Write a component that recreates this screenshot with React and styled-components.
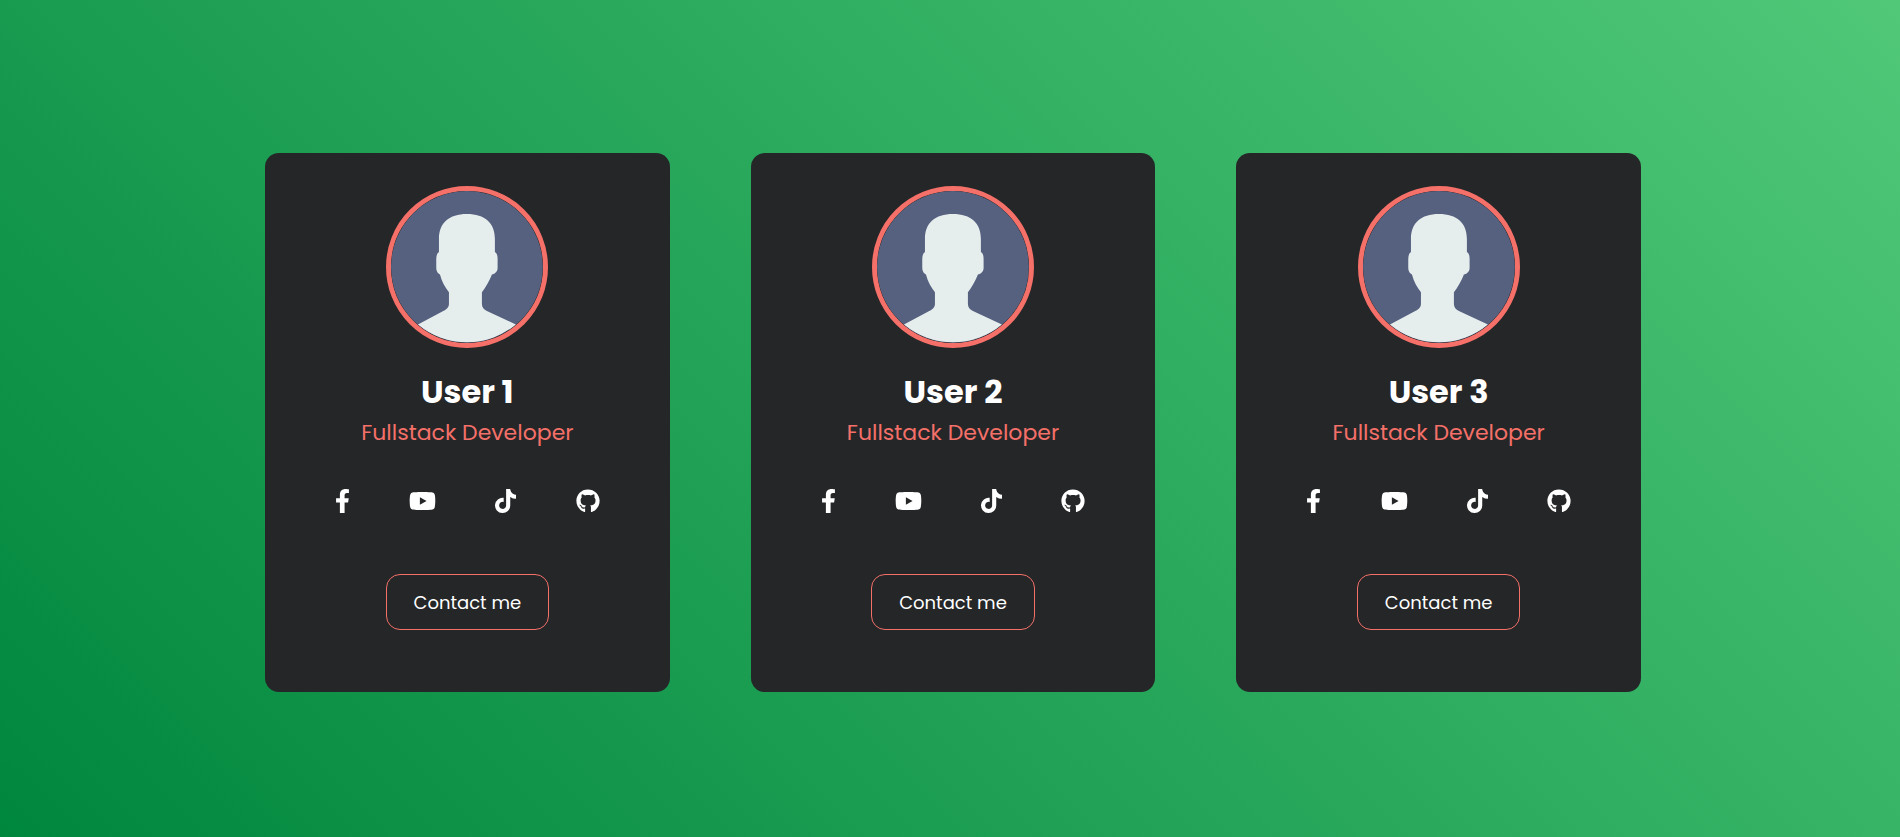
import React from "react";
import styled, { createGlobalStyle } from "styled-components";
import { FaFacebookF, FaYoutube, FaTiktok, FaGithub } from "react-icons/fa";

const GlobalStyle = createGlobalStyle`
  * {
    box-sizing: border-box;
    margin: 0;
    padding: 0;
  }

  body {
    font-family: Poppins, Inter, "Liberation Sans", sans-serif;
  }
`;

const Page = styled.main`
  display: flex;
  align-items: center;
  justify-content: center;
  min-height: 100vh;
  padding: 8px 0 0 6px;
  background: linear-gradient(45deg, #00873e, #50c878);
`;

const CardGrid = styled.div`
  display: grid;
  grid-template-columns: repeat(3, 1fr);
  gap: 81px;
  width: 100%;
  max-width: 1376px;

  @media (max-width: 1100px) {
    grid-template-columns: minmax(0, 405px);
    justify-content: center;
    gap: 40px;
    padding: 40px 20px;
  }
`;

const Card = styled.article`
  display: flex;
  flex-direction: column;
  align-items: center;
  padding: 33px 0 62px;
  border-radius: 14px;
  background: #252628;
  color: #fff;
`;

const Avatar = styled.svg`
  display: block;
  width: 40%;
  aspect-ratio: 1;
  margin-bottom: 20px;
  border: 5px solid #f47068;
  border-radius: 50%;
`;

const Name = styled.h2`
  font-size: 32px;
  font-weight: 700;
  line-height: 48px;
`;

const Role = styled.p`
  margin-bottom: 39px;
  color: #f47068;
  font-size: 22px;
  line-height: 34px;
`;

const Socials = styled.nav`
  display: flex;
  justify-content: space-around;
  width: 80%;
  margin-bottom: 61px;
`;

const SocialLink = styled.a`
  color: #fff;

  svg {
    display: block;
    width: ${({ $width }) => $width}px;
    height: 24px;
  }
`;

const ContactButton = styled.button`
  padding: 15px 27px 13px;
  border: 1px solid #f47068;
  border-radius: 14px;
  background: transparent;
  color: #fff;
  font-family: inherit;
  font-size: 18px;
  line-height: 26px;
  white-space: nowrap;
  cursor: pointer;
`;

const users = ["User 1", "User 2", "User 3"];

const socials = [
  { label: "Facebook", Icon: FaFacebookF, width: 15 },
  { label: "YouTube", Icon: FaYoutube, width: 27 },
  { label: "TikTok", Icon: FaTiktok, width: 21 },
  { label: "GitHub", Icon: FaGithub, width: 24 },
];

function ProfileCard({ name }) {
  return (
    <Card>
      <Avatar viewBox="0 0 152 152" aria-hidden="true">
        <circle cx="76" cy="76" r="76" fill="#566180" />
        <path
          fill="#e6eded"
          d="M76 23C58 23 48 32 48 48V61C46.200 62 45.300 65 45.300 68V77C45.300 80.500 47 82.500 49 83.500C51 91 54 96 58 101.300V113C58 116.500 55.500 118.500 52.300 120L27 133.500A76 76 0 0 0 125 133.500L96 120C93 118.500 91 116.500 91 113V101.300C95 96 98.500 90 101 83.500C104 83 106.700 80.500 106.700 77V68C106.700 65 106 62 104 61V48C104 32 94 23 76 23Z"
        />
      </Avatar>
      <Name>{name}</Name>
      <Role>Fullstack Developer</Role>
      <Socials aria-label={name}>
        {socials.map(({ label, Icon, width }) => (
          <SocialLink key={label} href="#" aria-label={label} $width={width}>
            <Icon />
          </SocialLink>
        ))}
      </Socials>
      <ContactButton type="button">Contact me</ContactButton>
    </Card>
  );
}

export default function App() {
  return (
    <>
      <GlobalStyle />
      <Page>
        <CardGrid>
          {users.map((name) => (
            <ProfileCard key={name} name={name} />
          ))}
        </CardGrid>
      </Page>
    </>
  );
}
